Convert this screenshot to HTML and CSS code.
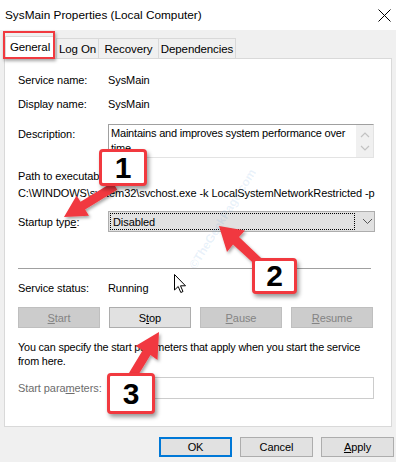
FILE: index.html
```html
<!DOCTYPE html>
<html>
<head>
<meta charset="utf-8">
<link rel="stylesheet" href="styles.css">
</head>
<body>
<div class="win">
  <div class="titlebar">
    <span class="title">SysMain Properties (Local Computer)</span>
    <svg class="close" width="13" height="13" viewBox="0 0 13 13"><path d="M0.5 0.5L12.5 12.5M12.5 0.5L0.5 12.5" stroke="#000" stroke-width="1"/></svg>
  </div>
  <div class="tabs">
    <div class="tab sel">General</div>
    <div class="tab t2">Log On</div>
    <div class="tab t3">Recovery</div>
    <div class="tab t4">Dependencies</div>
  </div>
  <div class="panel">
    <div class="row r1"><span class="lbl">Service name:</span><span class="val">SysMain</span></div>
    <div class="row r2"><span class="lbl">Display name:</span><span class="val">SysMain</span></div>
    <div class="row desc">
      <span class="lbl dl">Description:</span>
      <div class="textbox">
        <div class="tbtext">Maintains and improves system performance over time.</div>
        <div class="sbar">
          <svg width="10" height="6" viewBox="0 0 10 6"><path d="M1 5L5 1L9 5" fill="none" stroke="#c2c2c2" stroke-width="1.2"/></svg>
          <svg width="10" height="6" viewBox="0 0 10 6"><path d="M1 1L5 5L9 1" fill="none" stroke="#c2c2c2" stroke-width="1.2"/></svg>
        </div>
      </div>
    </div>
    <div class="row r4"><span>Path to executable:</span></div>
    <div class="row r5"><span class="path">C:\WINDOWS\system32\svchost.exe -k LocalSystemNetworkRestricted -p</span></div>
    <div class="row r6">
      <span class="lbl">Startup typ<u>e</u>:</span>
      <div class="combo">
        <div class="focus">Disabled</div>
        <svg class="chev" width="11" height="7" viewBox="0 0 11 7"><path d="M1 1L5.5 5.5L10 1" fill="none" stroke="#555" stroke-width="1"/></svg>
      </div>
    </div>
    <div class="sep"></div>
    <div class="row r7"><span class="lbl">Service status:</span><span class="val">Running</span></div>
    <div class="btnrow">
      <div class="btn dis"><u>S</u>tart</div>
      <div class="btn">S<u>t</u>op</div>
      <div class="btn dis"><u>P</u>ause</div>
      <div class="btn dis"><u>R</u>esume</div>
    </div>
    <div class="info">
      <span class="line">You can specify the start parameters that apply when you start the service</span>
      <span class="line">from here.</span>
    </div>
    <div class="row r8">
      <span class="lbl gray">Start para<u>m</u>eters:</span>
      <div class="input"></div>
    </div>
  </div>
  <div class="footer">
    <div class="btn fb ok">OK</div>
    <div class="btn fb">Cancel</div>
    <div class="btn fb"><u>A</u>pply</div>
  </div>

  <span class="wm">©TheGeekPage.com</span>

  <div class="hl"></div>

  <svg class="cursor" width="13" height="20" viewBox="0 0 13 20"><path d="M0.5 0.5L0.5 16L4.2 12.5L6.8 18.5L9 17.5L6.5 11.8L11.5 11.8Z" fill="#fff" stroke="#000" stroke-width="1" stroke-linejoin="round"/></svg>

  <svg class="arrows" width="396" height="462" viewBox="0 0 396 462">
    <defs>
      <filter id="sh" x="-20%" y="-20%" width="140%" height="140%">
        <feDropShadow dx="1.5" dy="2" stdDeviation="1.5" flood-color="#000" flood-opacity="0.35"/>
      </filter>
    </defs>
    <g fill="#f1393f" filter="url(#sh)">
      <polygon points="64,217 89,215.8 85.1,209.4 117.3,189.8 112.7,182.2 80.5,201.8 76.6,195.4"/>
      <polygon points="219,226 245,230.5 239,237 265,261.7 259,268.3 233,244.5 227,252"/>
      <polygon points="159,332 157.5,360 150.5,354.9 136.9,377.3 129.1,372.7 142.7,350.3 135.5,346"/>
    </g>
  </svg>

  <div class="callout c1">1</div>
  <div class="callout c2">2</div>
  <div class="callout c3">3</div>
</div>
</body>
</html>
```
FILE: styles.css
```css
* { box-sizing: border-box; }
html, body { margin: 0; padding: 0; }
body {
  width: 396px;
  height: 462px;
  overflow: hidden;
  background: #f0f0f0;
  font-family: "Liberation Sans", Arial, sans-serif;
  font-size: 11px;
  letter-spacing: -0.08px;
  color: #000;
}
.win { position: relative; width: 396px; height: 462px; }
u { text-decoration: underline; text-underline-offset: 1px; }

.titlebar {
  height: 30px;
  background: #fff;
  display: flex;
  align-items: center;
  justify-content: space-between;
  padding: 0 5px 1px 5px;
}
.title { font-size: 11.8px; letter-spacing: 0; }
.close { margin-top: 1px; }

.tabs {
  display: flex;
  padding: 8px 0 0 5px;
  height: 28px;
}
.tab {
  height: 20px;
  border: 1px solid #d9d9d9;
  border-bottom: none;
  background: #f0f0f0;
  display: flex;
  align-items: center;
  justify-content: center;
  font-size: 11.5px;
  letter-spacing: -0.1px;
}
.tab.sel {
  width: 50px;
  height: 23px;
  margin-top: -2px;
  background: #fff;
  position: relative;
  z-index: 2;
  padding-bottom: 2px;
}
.t2 { width: 43px; margin-left: 1px; }
.t3 { width: 60px; border-left: none; }
.t4 { width: 77px; border-left: none; }

.panel {
  margin-left: 4px;
  width: 388px;
  height: 369px;
  border: 1px solid #d9d9d9;
  background: #fff;
  padding: 13px 0 0 13px;
  position: relative;
  z-index: 1;
}
.row { display: flex; align-items: center; height: 16px; }
.lbl { width: 90px; flex: none; }
.r2 { margin-top: 8px; }
.desc { margin-top: 12px; height: 34px; align-items: flex-start; }
.dl { padding-top: 4px; }
.textbox {
  width: 266px;
  height: 34px;
  border: 1px solid #a0a0a0;
  border-right-color: #e3e3e3;
  border-bottom-color: #e3e3e3;
  display: flex;
  background: #fff;
}
.tbtext { flex: 1; padding: 1px 0 0 2px; line-height: 15px; letter-spacing: -0.2px; }
.sbar {
  width: 17px;
  background: #f0f0f0;
  display: flex;
  flex-direction: column;
  align-items: center;
  justify-content: space-around;
  padding: 4px 0 3px 0;
}
.r4 { margin-top: 10px; }
.r5 { margin-top: 1px; }
.path { white-space: nowrap; }
.r6 { margin-top: 10px; height: 21px; }
.combo {
  width: 267px;
  height: 21px;
  background: #e1e1e1;
  border: 1px solid #adadad;
  display: flex;
  align-items: center;
  padding: 1px;
}
.focus {
  width: 245px;
  height: 17px;
  border: 1px dotted #000;
  padding-left: 2px;
  display: flex;
  align-items: center;
}
.chev { margin-left: 7px; }
.sep {
  margin-top: 36px;
  width: 353px;
  height: 1px;
  background: #a0a0a0;
}
.r7 { margin-top: 11px; }
.btnrow {
  margin-top: 11px;
  display: grid;
  grid-template-columns: repeat(4, 82px);
  column-gap: 9px;
}
.btn {
  height: 21px;
  border: 1px solid #adadad;
  background: #e1e1e1;
  display: flex;
  align-items: center;
  justify-content: center;
}
.btn.dis {
  background: #cccccc;
  border-color: #bfbfbf;
  color: #838383;
}
.info {
  margin-top: 12px;
  display: flex;
  flex-direction: column;
  line-height: 14px;
  font-size: 10.8px;
  letter-spacing: -0.15px;
}
.line { display: block; white-space: nowrap; }
.r8 { margin-top: 9px; height: 22px; }
.gray { color: #6d6d6d; }
.input {
  width: 266px;
  height: 22px;
  border: 1px solid #cccccc;
  background: #fff;
}
.footer {
  display: flex;
  justify-content: flex-end;
  gap: 8px;
  padding: 10px 2px 0 0;
}
.fb { width: 73px; height: 20px; }
.ok { border: 2px solid #0078d7; }

.wm {
  position: absolute;
  left: 165px;
  top: 212px;
  transform: rotate(-58deg);
  transform-origin: center;
  color: rgba(80, 150, 220, 0.13);
  font-weight: bold;
  font-size: 12px;
  white-space: nowrap;
  z-index: 3;
}
.hl {
  position: absolute;
  left: 3px;
  top: 31px;
  width: 52px;
  height: 28px;
  border: 2.5px solid #f1393f;
  box-shadow: 1px 2px 3px rgba(0,0,0,0.35);
  z-index: 4;
}
.cursor { position: absolute; left: 174px; top: 274px; z-index: 4; }
.arrows { position: absolute; left: 0; top: 0; z-index: 5; pointer-events: none; }
.callout {
  position: absolute;
  z-index: 6;
  background: #fff;
  border: 3px solid #f1393f;
  border-radius: 4px;
  box-shadow: 2px 3px 4px rgba(0,0,0,0.4);
  display: flex;
  align-items: center;
  justify-content: center;
  font-family: "Liberation Sans", Arial, sans-serif;
  font-weight: bold;
  font-size: 30px;
  letter-spacing: 0;
  color: #000;
}
.c1 { left: 99px; top: 149px; width: 48px; height: 37px; }
.c2 { left: 252px; top: 258px; width: 45px; height: 36px; }
.c3 { left: 107px; top: 373px; width: 48px; height: 41px; }
```
